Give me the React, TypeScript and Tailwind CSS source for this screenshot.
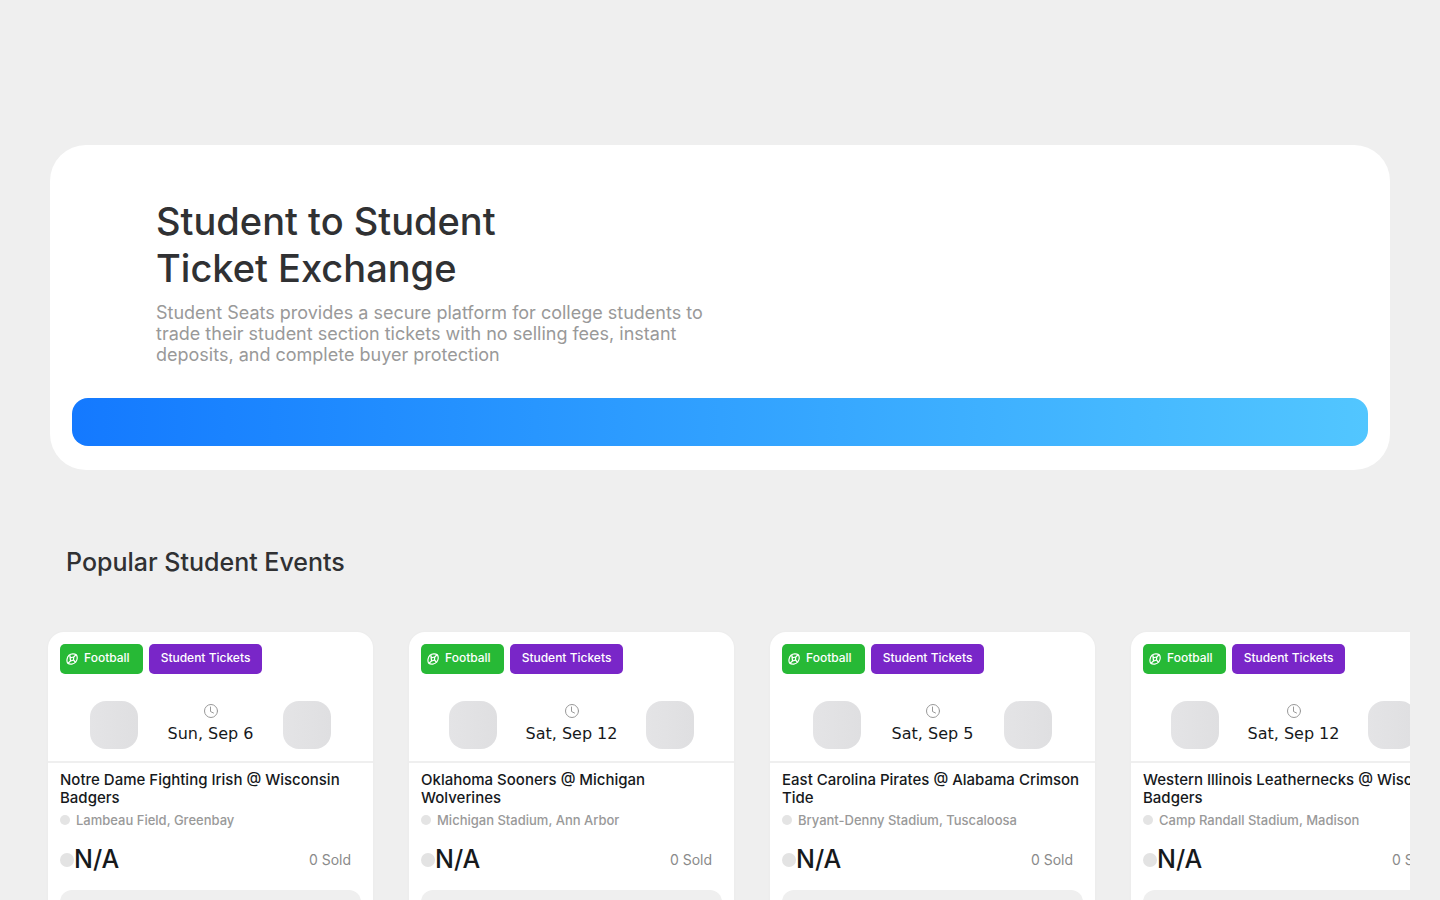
type EventItem = { title: [string, string]; venue: string; date: string };

const events: EventItem[] = [
  { title: ["Notre Dame Fighting Irish @ Wisconsin", "Badgers"], venue: "Lambeau Field, Greenbay", date: "Sun, Sep 6" },
  { title: ["Oklahoma Sooners @ Michigan", "Wolverines"], venue: "Michigan Stadium, Ann Arbor", date: "Sat, Sep 12" },
  { title: ["East Carolina Pirates @ Alabama Crimson", "Tide"], venue: "Bryant-Denny Stadium, Tuscaloosa", date: "Sat, Sep 5" },
  { title: ["Western Illinois Leathernecks @ Wisconsin", "Badgers"], venue: "Camp Randall Stadium, Madison", date: "Sat, Sep 12" },
];

function FootballIcon() {
  return (
    <svg viewBox="0 0 24 24" className="size-3" fill="none" stroke="currentColor" strokeWidth="2.4" strokeLinecap="round" aria-hidden="true">
      <path d="M6 4.5C10 1 17 .8 20.5 3.5 23.500 7 23 14 19.500 18 15.500 23 7.500 23.500 3.500 20.500.8 17 1.500 8.500 6 4.500Z" />
      <path d="M7.500 4.500 9 9.500 15.500 8 15 14 9 16ZM15.500 8 19.500 4M9 16 4.500 20M9 9.500 9 16M15 14 18.500 18" />
    </svg>
  );
}

function ClockIcon() {
  return (
    <svg viewBox="0 0 16 16" className="ml-px size-4 text-[#999]" fill="none" stroke="currentColor" strokeLinecap="round" aria-hidden="true">
      <circle cx="8" cy="8" r="6.500" />
      <path d="M7.500 4v4.500l3 1.500" />
    </svg>
  );
}

function TeamLogo() {
  return <div className="size-12 shrink-0 rounded-2xl bg-linear-to-r from-[#e4e4e6] to-[#dfdfe1]" />;
}

function EventCard({ event }: { event: EventItem }) {
  return (
    <article className="w-[325px] shrink-0 rounded-2xl bg-white pb-3 shadow-[0_0_3px_rgba(0,0,0,0.03)]">
      <div className="flex gap-1.5 px-3 pt-3 text-xs font-medium text-white">
        <span className="flex h-[30px] w-[83px] items-center gap-1.5 rounded-[5px] bg-[#27b936] pl-1.5">
          <FootballIcon />
          <span className="pb-0.5">Football</span>
        </span>
        <span className="flex h-[30px] w-[113px] items-center justify-center rounded-[5px] bg-[#7926c8] pb-0.5">
          Student Tickets
        </span>
      </div>
      <div className="mt-[27px] flex items-center justify-evenly px-3">
        <TeamLogo />
        <div className="flex flex-col items-center gap-[3px] pb-px">
          <ClockIcon />
          <time className="font-['DejaVu_Sans',sans-serif] text-base leading-6 text-[#17191b]">{event.date}</time>
        </div>
        <TeamLogo />
      </div>
      <hr className="mt-3 border-t-2 border-[#efefef]" />
      <div className="px-3 pt-2">
        <h3 className="text-[15px] leading-[18px] font-medium whitespace-nowrap text-[#16191c]">
          {event.title[0]}
          <br />
          {event.title[1]}
        </h3>
        <p className="mt-1 flex items-center gap-1.5 text-[13px] leading-[18px] font-medium text-[#999]">
          <span className="size-2.5 rounded-full bg-[#e4e4e4]" />
          {event.venue}
        </p>
        <div className="mt-4 flex h-[30px] items-center justify-between pr-2.5">
          <div className="flex items-center">
            <span className="size-3.5 rounded-full bg-[#e3e3e3]" />
            <span className="text-[25px] font-medium text-[#16191c]">N/A</span>
          </div>
          <span className="text-sm text-[#8a8a8a]">0 Sold</span>
        </div>
        <button type="button" aria-label="View tickets" className="mt-[15px] block h-12 w-full rounded-xl bg-[#efefef]" />
      </div>
    </article>
  );
}

export default function App() {
  return (
    <main className="min-h-screen bg-[#efefef] pt-[145px] font-[Inter,sans-serif]">
      <section className="mx-[50px] rounded-[36px] bg-white px-[22px] pb-6">
        <div className="px-[84px] pt-[53px]">
          <h1 className="text-[38px] leading-[47px] font-medium text-[#303133]">
            Student to Student
            <br />
            Ticket Exchange
          </h1>
          <p className="mt-[10px] max-w-[560px] text-lg leading-[21px] text-[#999]">
            Student Seats provides a secure platform for college students to
            <br />
            trade their student section tickets with no selling fees, instant
            <br />
            deposits, and complete buyer protection
          </p>
        </div>
        <div className="mt-[33px] h-12 rounded-2xl bg-linear-to-r from-[#1479ff] to-[#52c6ff]" />
      </section>
      <section className="pt-[74px]">
        <h2 className="px-[66px] text-[25px] leading-9 font-medium text-[#303133]">Popular Student Events</h2>
        <div className="mx-[30px] mt-[42px] flex gap-9 overflow-hidden pt-[10px] pb-10 pl-[18px]">
          {events.map((event) => (
            <EventCard key={event.venue} event={event} />
          ))}
        </div>
      </section>
    </main>
  );
}
